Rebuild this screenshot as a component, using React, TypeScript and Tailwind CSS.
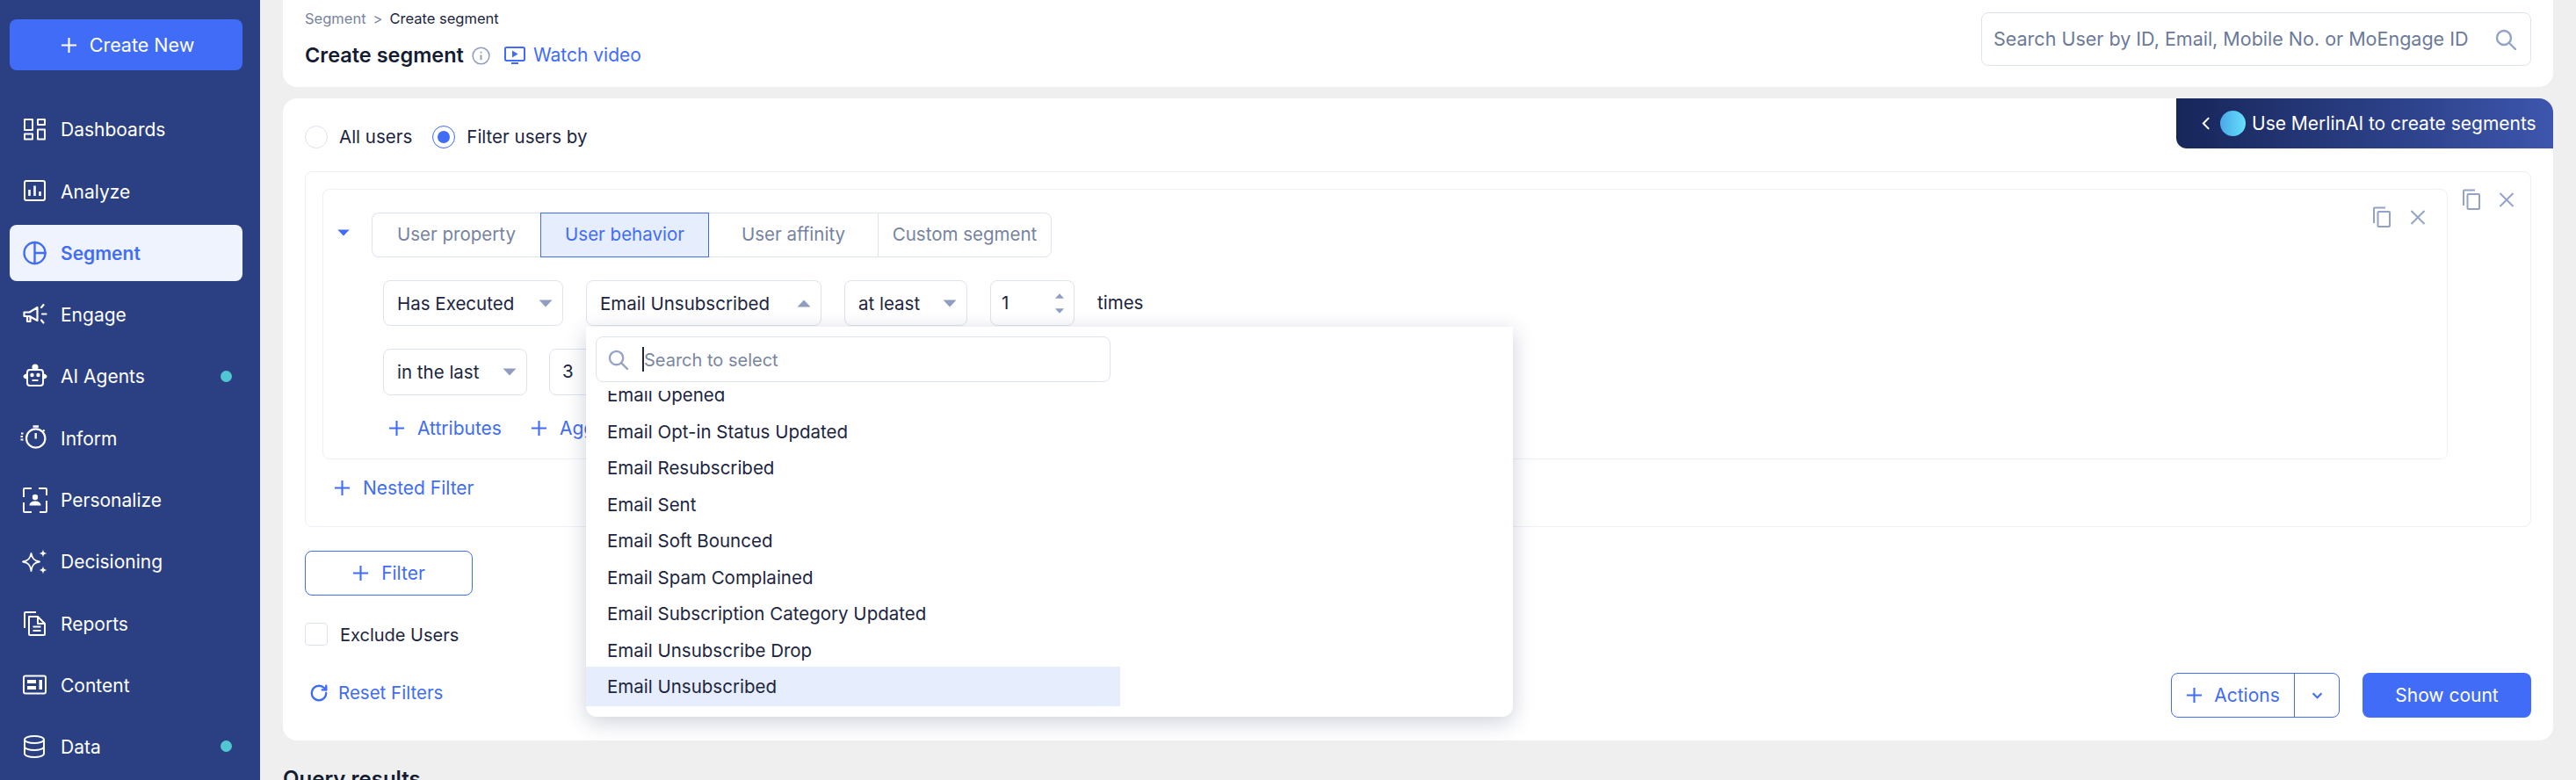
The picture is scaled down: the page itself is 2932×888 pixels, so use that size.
import { RotateCw } from "lucide-react";
import type { ReactNode } from "react";

const sw = { fill: "none", stroke: "currentColor", strokeWidth: 2, strokeLinecap: "round", strokeLinejoin: "round" } as const;

function Icon({ children, className = "" }: { children: ReactNode; className?: string }) {
  return (
    <svg viewBox="0 0 28 28" className={`size-[28px] shrink-0 overflow-visible ${className}`} {...sw}>
      {children}
    </svg>
  );
}

function PlusIcon({ className }: { className: string }) {
  return (
    <svg viewBox="0 0 20 20" className={`shrink-0 ${className}`} fill="none" stroke="currentColor" strokeWidth="2.2">
      <path d="M10 1v18M1 10h18" />
    </svg>
  );
}

function Tri({ up = false, className }: { up?: boolean; className: string }) {
  return (
    <svg viewBox="0 0 16 9" className={`shrink-0 ${className}`} fill="currentColor">
      <path d={up ? "M8 0.5 15.5 8.5H.5Z" : "M.5.5h15L8 8.5Z"} />
    </svg>
  );
}

function SearchIcon({ className }: { className: string }) {
  return (
    <svg viewBox="0 0 24 24" className={`shrink-0 ${className}`} fill="none" stroke="currentColor" strokeWidth="2.4" strokeLinecap="round">
      <circle cx="10" cy="10" r="8" />
      <path d="m16 16 7 7" />
    </svg>
  );
}

function CopyIcon() {
  return (
    <svg viewBox="0 0 21 24" className="h-[24px] w-[21px]" fill="none" stroke="#93a2c6" strokeWidth="2">
      <path d="M2 19V2.5a1 1 0 0 1 1-1h12" />
      <rect x="6.5" y="6" width="13.5" height="17" rx="1" />
    </svg>
  );
}

function CloseIcon() {
  return (
    <svg viewBox="0 0 18 17" className="h-[17px] w-[18px]" fill="none" stroke="#93a2c6" strokeWidth="2">
      <path d="m1.5 1 15 15M16.5 1l-15 15" />
    </svg>
  );
}

const navItems: { label: string; icon: ReactNode; active?: boolean; dot?: boolean }[] = [
  {
    label: "Dashboards",
    icon: (
      <Icon>
        <rect x="2" y="3" width="9" height="12" />
        <rect x="17" y="3" width="8" height="6" />
        <rect x="2" y="19.5" width="9" height="6" />
        <rect x="17" y="14.5" width="8" height="11" />
      </Icon>
    ),
  },
  {
    label: "Analyze",
    icon: (
      <Icon>
        <rect x="2" y="3" width="23" height="22" rx="2" />
        <path d="M7.5 13v7M13.5 8.5V20M19.5 15v5" strokeLinecap="butt" strokeWidth="2.6" />
      </Icon>
    ),
  },
  {
    label: "Segment",
    active: true,
    icon: (
      <Icon>
        <circle cx="13.5" cy="14" r="12" strokeWidth="2.4" />
        <path d="M13.5 2v24M13.5 14h12" strokeWidth="2.4" />
      </Icon>
    ),
  },
  {
    label: "Engage",
    icon: (
      <Icon>
        <path d="M1.5 11.5h6l9-5.5v15l-9-5h-6z" strokeWidth="2.2" />
        <path d="M5 16.5v5.5h3.5v-5.5M21 6l2.5-3M22 13.5h4.5M21 20.5l2.5 3" strokeWidth="2.2" />
      </Icon>
    ),
  },
  {
    label: "AI Agents",
    dot: true,
    icon: (
      <Icon>
        <rect x="5" y="7" width="18" height="18" rx="3" />
        <circle cx="14" cy="4" r="2.6" fill="currentColor" />
        <path d="M4 11.5C2 12 .5 13 .5 14.5S2 17 4 17.5zM24 11.5c2 .5 3.5 1.5 3.5 3s-1.5 2.5-3.5 3z" fill="currentColor" stroke="none" />
        <circle cx="10.5" cy="13" r="1.2" fill="currentColor" />
        <circle cx="17.5" cy="13" r="1.2" fill="currentColor" />
        <path d="M10.5 19h7" strokeLinecap="butt" />
      </Icon>
    ),
  },
  {
    label: "Inform",
    icon: (
      <Icon>
        <circle cx="14.7" cy="15" r="10.7" strokeWidth="2.2" />
        <path d="M11.5 1.5h6.5M14.7 9v6.5M23 5.5l1.5 1.5" strokeLinecap="butt" strokeWidth="2.4" />
        <path d="M-2 9.5h2.5M-2.5 13h2.5M-2.5 16.5h3" strokeLinecap="butt" strokeWidth="2.2" />
      </Icon>
    ),
  },
  {
    label: "Personalize",
    icon: (
      <Icon>
        <path d="M10 1H2a1 1 0 0 0-1 1v9M18 1h8a1 1 0 0 1 1 1v7M27 15v12a1 1 0 0 1-1 1h-7M1 17v10a1 1 0 0 0 1 1h8" strokeLinecap="butt" />
        <circle cx="14" cy="11" r="3.2" fill="currentColor" stroke="none" />
        <path d="M7.5 20.5c0-3.5 3-5 6.5-5s6.5 1.5 6.5 5z" fill="currentColor" stroke="none" />
      </Icon>
    ),
  },
  {
    label: "Decisioning",
    icon: (
      <Icon>
        <path d="M9.5 5C10.5 11 13 13.5 19 14.5 13 15.5 10.5 18 9.5 25 8.5 18 6 15.5 0 14.5 6 13.5 8.5 11 9.5 5Z" strokeWidth="1.8" />
        <path d="M23 .5c.5 3 1.5 4 4.5 4.5-3 .5-4 1.5-4.5 4.5-.5-3-1.5-4-4.5-4.5 3-.5 4-1.5 4.5-4.5ZM23 19.5c.5 3 1.5 4 4.5 4.5-3 .5-4 1.5-4.5 4.5-.5-3-1.5-4-4.5-4.5 3-.5 4-1.5 4.5-4.5Z" fill="currentColor" stroke="none" />
      </Icon>
    ),
  },
  {
    label: "Reports",
    icon: (
      <Icon>
        <path d="M2 20V3a1 1 0 0 1 1-1h12" strokeLinecap="butt" />
        <path d="M7 7h10l8 8v12a1 1 0 0 1-1 1H8a1 1 0 0 1-1-1zM11.5 18.5h9M11.5 23h9M17 7v8h8" strokeLinecap="butt" />
      </Icon>
    ),
  },
  {
    label: "Content",
    icon: (
      <Icon>
        <rect x="1" y="3.5" width="25" height="20" rx="2" />
        <path d="M5 8h10v4H5zM5 15h10v4H5zM18.5 8H22v11h-3.5z" fill="currentColor" stroke="none" />
      </Icon>
    ),
  },
  {
    label: "Data",
    dot: true,
    icon: (
      <Icon>
        <ellipse cx="13" cy="6" rx="11" ry="4" />
        <path d="M2 6v16c0 2.2 4.9 4 11 4s11-1.8 11-4V6M2 14c0 2.2 4.9 4 11 4s11-1.8 11-4" />
      </Icon>
    ),
  },
];

const emailEvents = [
  "Email Opened",
  "Email Opt-in Status Updated",
  "Email Resubscribed",
  "Email Sent",
  "Email Soft Bounced",
  "Email Spam Complained",
  "Email Subscription Category Updated",
  "Email Unsubscribe Drop",
];

function Sidebar() {
  return (
    <aside className="flex h-[888px] w-[296px] shrink-0 flex-col overflow-hidden bg-[#2b3f83] pl-[11px] pr-[20px] pt-[22px]">
      <button className="flex h-[58px] items-center justify-center gap-[14px] rounded-lg bg-[#406cf8] pl-[3px] text-[21.5px] text-white">
        <PlusIcon className="size-[19px]" />
        Create New
      </button>
      <nav className="mt-[35px] flex flex-col gap-[6.3px]">
        {navItems.map((item) => (
          <a
            key={item.label}
            className={`flex h-[64px] shrink-0 items-center gap-[15px] rounded-lg pl-[15px] pr-[12px] text-[21px] ${
              item.active ? "bg-[#eff3fd] font-semibold text-[#406cf8]" : "text-white"
            }`}
          >
            {item.icon}
            <span className="pt-[2px]">{item.label}</span>
            {item.dot && <span className="ml-auto size-[13px] rounded-full bg-[#52c7d3]" />}
          </a>
        ))}
      </nav>
    </aside>
  );
}

function Select({ label, width, up = false, gap }: { label: string; width: string; up?: boolean; gap?: string }) {
  return (
    <div className={`flex items-center justify-between rounded-lg border border-[#dde3f0] bg-white pl-[15px] text-[20.5px] text-[#1c2541] ${width} ${gap ?? ""}`}>
      <span className="pt-[2px]">{label}</span>
      <Tri up={up} className="mr-[11px] h-[9px] w-[16px] text-[#8f9dc2]" />
    </div>
  );
}

function Header() {
  return (
    <header className="flex h-[99px] items-start justify-between rounded-b-2xl bg-white pl-[25px] pr-[25px]">
      <div className="pt-[10px]">
        <p className="flex items-center gap-[8px] text-[16.5px] leading-[22px]">
          <span className="text-[#76839f]">Segment</span>
          <span className="text-[#76839f]">&gt;</span>
          <span className="text-[#1c2541]">Create segment</span>
        </p>
        <div className="mt-[15px] flex items-center">
          <h1 className="text-[23.5px] font-semibold leading-[32px] text-[#141c33]">Create segment</h1>
          <svg viewBox="0 0 22 22" className="ml-[9px] size-[21px]" fill="none" stroke="#8f9dc2" strokeWidth="1.6">
            <circle cx="11" cy="11" r="9.8" />
            <path d="M11 10v6M11 6v1.8" strokeWidth="2" />
          </svg>
          <svg viewBox="0 0 24 20" className="ml-[16px] h-[20px] w-[24px]" fill="none" stroke="#406cf8" strokeWidth="2">
            <rect x="1" y="1" width="22" height="15" rx="1.5" />
            <path d="M9 4.5v8l6.5-4z" fill="#406cf8" stroke="none" />
            <path d="M8 19h8" />
          </svg>
          <a className="ml-[9px] text-[21px] text-[#406cf8]">Watch video</a>
        </div>
      </div>
      <div className="mt-[14px] flex h-[61px] w-[626px] items-center justify-between rounded-lg border border-[#dde3f0] px-[13px]">
        <input
          readOnly
          placeholder="Search User by ID, Email, Mobile No. or MoEngage ID"
          className="w-[560px] bg-transparent text-[21.5px] outline-none placeholder:text-[#6b7a99]"
        />
        <SearchIcon className="mr-[3px] size-[24px] text-[#93a2c6]" />
      </div>
    </header>
  );
}

function EventDropdown() {
  return (
    <div className="absolute left-[345px] top-[260px] flex h-[444px] w-[1055px] flex-col overflow-hidden rounded-b-xl bg-white shadow-[0_6px_24px_rgba(30,45,90,0.22)]">
      <div className="mx-[11px] mt-[11px] flex h-[52px] w-[586px] shrink-0 items-center rounded-lg border border-[#dde3f0] pl-[13px]">
        <SearchIcon className="size-[23px] text-[#93a2c6]" />
        <span className="ml-[16px] h-[28px] w-[2px] bg-[#1c2541]" />
        <span className="pt-[2px] text-[20px] text-[#7a869f]">Search to select</span>
      </div>
      <ul className="mt-[10px] w-[608px] flex-1 overflow-hidden text-[20.5px] text-[#1c2541]">
        <div className="-mt-[15.5px]">
          {emailEvents.map((name) => (
            <li key={name} className="flex h-[41.6px] items-center pl-[24px]">
              {name}
            </li>
          ))}
          <li className="-mt-[3.6px] flex h-[45px] items-center bg-[#e6edfc] pl-[24px] pt-[2px]">Email Unsubscribed</li>
        </div>
      </ul>
    </div>
  );
}

function FilterCard() {
  return (
    <section className="relative h-[731px] rounded-2xl bg-white px-[25px]">
      <div className="absolute right-0 top-0 flex h-[57px] w-[429px] items-center rounded-bl-xl rounded-tr-2xl bg-gradient-to-r from-[#17265a] to-[#3d56ad] pl-[29px] text-[21px] text-white">
        <svg viewBox="0 0 11 16" className="h-[15px] w-[10px]" fill="none" stroke="white" strokeWidth="2.2">
          <path d="M9 1 2 8l7 7" />
        </svg>
        <span className="ml-[11px] size-[29px] rounded-full bg-gradient-to-r from-[#4aa8e8] to-[#66e0fb]" />
        <span className="ml-[7px]">Use MerlinAI to create segments</span>
      </div>

      <div className="h-[83px] pt-[31px]">
        <div className="flex h-[26px] items-center gap-[13px] text-[20.5px] text-[#1c2541]">
          <span className="size-[26px] rounded-full border border-[#dde3f0]" />
          <span>All users</span>
          <span className="ml-[10px] flex size-[26px] items-center justify-center rounded-full border border-[#406cf8]">
            <span className="size-[14px] rounded-full bg-[#406cf8]" />
          </span>
          <span>Filter users by</span>
        </div>
      </div>

      <div className="h-[405px] rounded-lg border border-[#edf0f7] pl-[19px] pr-[18px] pt-[19px]">
        <div className="flex items-start">
          <div className="h-[308px] flex-1 rounded-lg border border-[#edf0f7]">
            <div className="flex items-start pl-[15px] pt-[26px]">
              <Tri className="mt-[19px] h-[8px] w-[16px] text-[#406cf8]" />
              <div className="ml-[24px] flex h-[51px] items-stretch text-[20.5px] text-[#76839f]">
                <span className="flex w-[192px] items-center justify-center rounded-l-lg border border-r-0 border-[#dde3f0]">User property</span>
                <span className="flex w-[192px] items-center justify-center border border-[#406cf8] bg-[#e6edfc] text-[#406cf8]">User behavior</span>
                <span className="flex w-[192px] items-center justify-center border-y border-[#dde3f0]">User affinity</span>
                <span className="flex w-[198px] items-center justify-center rounded-r-lg border border-[#dde3f0]">Custom segment</span>
              </div>
              <div className="ml-auto mr-[24px] mt-[-7px] flex items-center gap-[22px]">
                <CopyIcon />
                <CloseIcon />
              </div>
            </div>

            <div className="mt-[26px] flex h-[52px] items-stretch pl-[68px]">
              <Select label="Has Executed" width="w-[205px]" />
              <Select label="Email Unsubscribed" width="w-[268px]" up gap="ml-[26px]" />
              <Select label="at least" width="w-[140px]" gap="ml-[26px]" />
              <div className="ml-[26px] flex w-[96px] items-center justify-between rounded-lg border border-[#dde3f0] pl-[12px] pr-[10px] text-[20.5px] text-[#1c2541]">
                1
                <span className="flex flex-col gap-[11px]">
                  <Tri up className="h-[6px] w-[12px] text-[#8f9dc2]" />
                  <Tri className="h-[6px] w-[12px] text-[#8f9dc2]" />
                </span>
              </div>
              <span className="ml-[26px] flex items-center text-[20.5px] text-[#1c2541]">times</span>
            </div>

            <div className="mt-[26px] flex h-[53px] items-stretch pl-[68px]">
              <Select label="in the last" width="w-[164px]" />
              <div className="ml-[25px] flex w-[200px] items-center rounded-lg border border-[#dde3f0] pl-[14px] text-[20.5px] text-[#1c2541]">3</div>
            </div>

            <div className="mt-[22px] flex items-center pl-[74px] text-[21px] text-[#406cf8]">
              <PlusIcon className="size-[19px]" />
              <span className="ml-[14px]">Attributes</span>
              <PlusIcon className="ml-[33px] size-[19px]" />
              <span className="ml-[14px]">Aggregation</span>
            </div>
          </div>
          <div className="ml-[16px] flex items-center gap-[21px]">
            <CopyIcon />
            <CloseIcon />
          </div>
        </div>
        <div className="mt-[17px] flex items-center pl-[13px] text-[21px] text-[#406cf8]">
          <PlusIcon className="size-[19px]" />
          <span className="ml-[14px]">Nested Filter</span>
        </div>
      </div>

      <button className="mt-[27px] flex h-[51px] w-[191px] items-center justify-center gap-[14px] rounded-lg border border-[#406cf8] text-[21px] text-[#406cf8]">
        <PlusIcon className="size-[19px]" />
        Filter
      </button>

      <label className="mt-[31px] flex h-[26px] items-center gap-[14px] text-[20px] text-[#1c2541]">
        <span className="h-[26px] w-[26px] rounded border border-[#dde3f0]" />
        <span className="pt-[2px]">Exclude Users</span>
      </label>

      <div className="mt-[31px] flex items-center justify-between">
        <a className="-mt-[5px] flex items-center gap-[11px] pl-[5px] text-[20.5px] text-[#406cf8]">
          <RotateCw className="size-[22px]" strokeWidth={2.6} />
          Reset Filters
        </a>
        <div className="flex h-[51px] gap-[26px] text-[21px]">
          <div className="flex w-[192px] rounded-lg border border-[#406cf8] text-[#406cf8]">
            <span className="flex w-[140px] items-center justify-center gap-[13px] border-r border-[#406cf8]">
              <PlusIcon className="size-[19px]" />
              Actions
            </span>
            <span className="flex flex-1 items-center justify-center">
              <svg viewBox="0 0 14 9" className="h-[8px] w-[13px]" fill="none" stroke="currentColor" strokeWidth="2.4">
                <path d="m1.5 1.5 5.5 5.5 5.5-5.5" />
              </svg>
            </span>
          </div>
          <button className="w-[192px] rounded-lg bg-[#406cf8] text-white">Show count</button>
        </div>
      </div>

      <EventDropdown />
    </section>
  );
}

export default function App() {
  return (
    <div className="flex h-[888px] w-[2932px] overflow-hidden bg-[#efefef] font-['Inter',sans-serif]">
      <Sidebar />
      <main className="min-w-0 flex-1 px-[26px]">
        <Header />
        <div className="mt-[13px]">
          <FilterCard />
        </div>
        <h2 className="mt-[28px] text-[24px] font-semibold leading-[32px] text-[#141c33]">Query results</h2>
      </main>
    </div>
  );
}
